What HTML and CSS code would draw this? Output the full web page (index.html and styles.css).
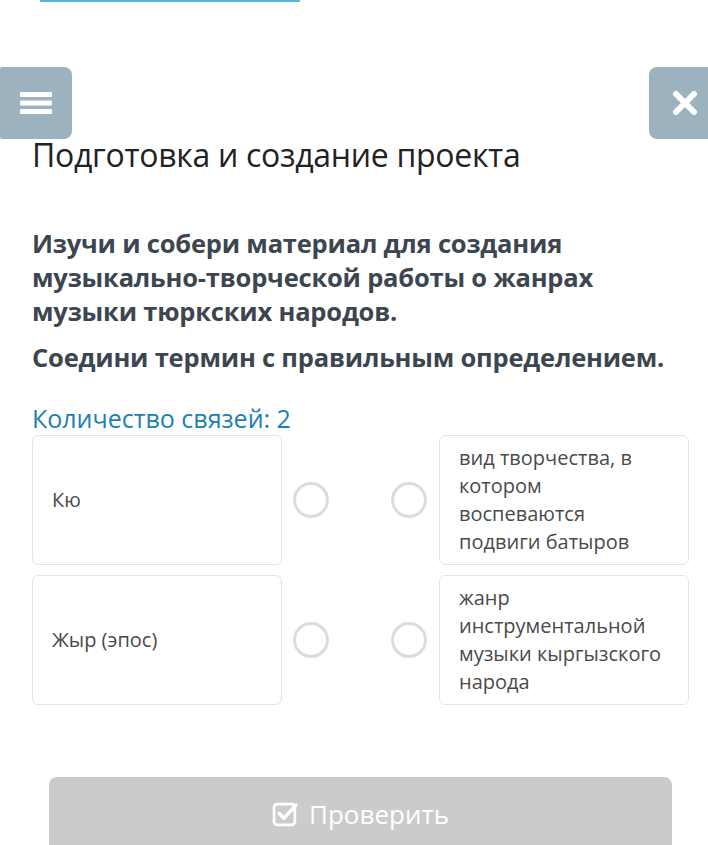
FILE: index.html
```html
<!DOCTYPE html>
<html lang="ru">
<head>
  <meta charset="UTF-8" />
  <title>Подготовка и создание проекта</title>
  <link rel="stylesheet" href="styles.css">
</head>
<body>
  <div class="progress"></div>

  <div class="toolbar">
    <button class="tool-btn menu-btn" title="Меню">
      <svg width="32" height="22" viewBox="0 0 32 22">
        <rect x="0" y="0" width="32" height="5" rx="1" fill="#fff"/>
        <rect x="0" y="8.5" width="32" height="5" rx="1" fill="#fff"/>
        <rect x="0" y="17" width="32" height="5" rx="1" fill="#fff"/>
      </svg>
    </button>
    <button class="tool-btn close-btn" title="Закрыть">
      <svg width="26" height="26" viewBox="0 0 26 26">
        <path d="M4 4 L22 22 M22 4 L4 22" stroke="#fff" stroke-width="6" stroke-linecap="round"/>
      </svg>
    </button>
  </div>

  <h1 class="title">Подготовка и создание проекта</h1>

  <p class="task">Изучи и собери материал для создания музыкально-творческой работы о жанрах музыки тюркских народов.</p>
  <p class="task task-sub">Соедини термин с правильным определением.</p>

  <div class="links-count">Количество связей: 2</div>

  <div class="match">
    <div class="card">Кю</div>
    <span class="dot dot-left"></span>
    <span class="dot dot-right"></span>
    <div class="card">вид творчества, в котором воспеваются подвиги батыров</div>

    <div class="card">Жыр (эпос)</div>
    <span class="dot dot-left"></span>
    <span class="dot dot-right"></span>
    <div class="card">жанр инструментальной музыки кыргызского народа</div>
  </div>

  <button class="check-btn">
    <svg width="27" height="27" viewBox="0 0 26 26">
      <rect x="2" y="3" width="20" height="20" rx="3" fill="none" stroke="#fff" stroke-width="2.6"/>
      <path d="M7 12 L11.5 16.5 L23 4" fill="none" stroke="#fff" stroke-width="3.4" stroke-linecap="round" stroke-linejoin="round"/>
    </svg>
    Проверить
  </button>
</body>
</html>
```

FILE: styles.css
```css
body { margin: 0; font-family: "Open Sans", "Noto Sans", sans-serif; background: #fff; color: #222; overflow: hidden; }
.progress { margin-left: 40px; width: 260px; height: 2px; background: #5ab6d2; }
.toolbar { display: flex; justify-content: space-between; margin-top: 65px; margin-right: -13px; }
.tool-btn { width: 72px; height: 72px; border: none; background: #9cb2bf; display: flex; align-items: center; justify-content: center; padding: 0; }
.menu-btn { border-radius: 2px 8px 8px 2px; }
.close-btn { border-radius: 8px; }
.title { margin: -5px 0 0 32px; font-size: 32px; line-height: 42px; font-weight: 400; color: #222; letter-spacing: -0.3px; }
.task { margin: 50px 24px 0 32px; font-size: 25.5px; line-height: 34px; font-weight: 700; color: #3b4650; letter-spacing: -0.2px; }
.task-sub { margin-top: 12px; }
.links-count { margin: 27px 0 0 32px; font-size: 25px; line-height: 34px; color: #1c7fb4; }
.match { display: grid; grid-template-columns: 250px 47px 110px 250px; row-gap: 10px; margin-left: 32px; align-items: center; }
.dot-left { justify-self: end; }
.dot-right { justify-self: start; margin-left: 62px; }
.card { box-sizing: border-box; height: 130px; border: 1px solid #e2e4e6; border-radius: 6px; padding: 0 20px 0 19px; display: flex; align-items: center; font-size: 20px; line-height: 28px; color: #4a4a4a; }
.dot { width: 36px; height: 36px; box-sizing: border-box; border: 3px solid #dcdcdc; border-radius: 50%; }
.check-btn { display: flex; align-items: center; justify-content: center; gap: 10px; margin: 72px 0 0 49px; width: 623px; height: 80px; border: none; border-radius: 8px; background: #cbcbcb; color: #fff; font-family: "Open Sans", sans-serif; font-size: 26px; padding: 0 0 6px 0; }
```
